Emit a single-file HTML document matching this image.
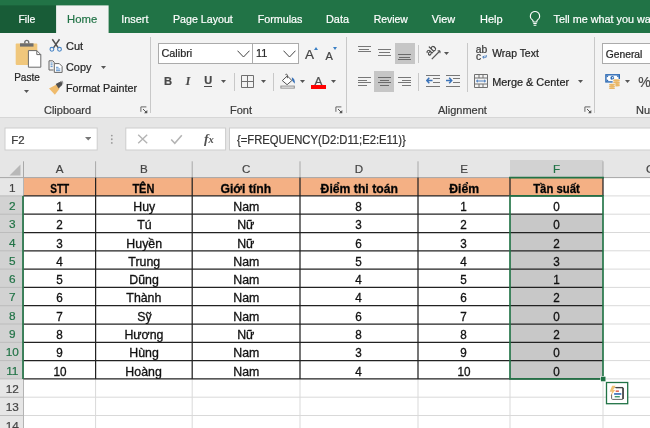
<!DOCTYPE html>
<html><head><meta charset="utf-8"><title>Excel</title>
<style>
html,body{margin:0;padding:0;}
body{width:650px;height:428px;overflow:hidden;position:relative;background:#fff;font-family:"Liberation Sans",sans-serif;color:#222;}
.abs{position:absolute;}
#wrap{position:absolute;left:0;top:0;width:650px;height:428px;overflow:hidden;will-change:transform;}
#titlebar{left:0;top:0;width:650px;height:33px;background:#217346;}
.tab{-webkit-text-stroke:0.2px currentColor;position:absolute;top:5px;height:28px;line-height:29px;color:#fff;font-size:11.5px;text-align:center;white-space:nowrap;}
#ribbon{left:0;top:33px;width:650px;height:85px;background:#f3f3f3;border-bottom:1px solid #d6d6d6;box-sizing:border-box;}
.rt{-webkit-text-stroke:0.22px currentColor;position:absolute;font-size:11.3px;color:#262626;white-space:nowrap;line-height:14px;}
.gl{-webkit-text-stroke:0.22px currentColor;position:absolute;font-size:11px;color:#3c3c3c;white-space:nowrap;line-height:14px;text-align:center;}
.vsep{position:absolute;width:1px;background:#d0d0d0;}
#fbar{left:0;top:118px;width:650px;height:42px;background:#e6e6e6;}
.box{position:absolute;background:#fff;border:1px solid #cfcfcf;box-sizing:border-box;}
#grid{left:0;top:160px;width:650px;height:268px;background:#fff;}
.ch{-webkit-text-stroke:0.2px currentColor;position:absolute;top:160px;height:17.6px;line-height:18.5px;font-size:11.6px;color:#3a3a3a;text-align:center;}
.rhd{-webkit-text-stroke:0.2px currentColor;position:absolute;left:0.5px;width:24px;font-size:11.8px;color:#444;text-align:center;}
.cell{position:absolute;font-size:12.6px;color:#111;-webkit-text-stroke:0.32px #111;text-align:center;white-space:nowrap;overflow:hidden;}
.hl{position:absolute;height:1px;background:#d4d4d4;}
.vl{position:absolute;width:1px;background:#d4d4d4;}
.bh{position:absolute;height:1.3px;background:#2b2b2b;}
.bv{position:absolute;width:1.3px;background:#2b2b2b;}
</style></head><body><div id="wrap">

<div id="titlebar" class="abs"></div>
<svg class="abs" style="left:0;top:0" width="120" height="36" viewBox="0 0 120 36"><rect x="0" y="5.4" width="56.1" height="27.6" fill="#185c37"/><rect x="56.1" y="5.4" width="52.5" height="29" fill="#f3f3f3"/></svg>
<div class="tab" style="left:-23.15px;width:100px;color:#fff;font-size:10.5px;">File</div>
<div class="tab" style="left:32.150000000000006px;width:100px;color:#217346;font-size:11.3px;">Home</div>
<div class="tab" style="left:84.85px;width:100px;color:#fff;font-size:10.85px;">Insert</div>
<div class="tab" style="left:152.9px;width:100px;color:#fff;font-size:10.65px;">Page Layout</div>
<div class="tab" style="left:230.05px;width:100px;color:#fff;font-size:10.75px;">Formulas</div>
<div class="tab" style="left:287.5px;width:100px;color:#fff;font-size:10.9px;">Data</div>
<div class="tab" style="left:340.8px;width:100px;color:#fff;font-size:10.45px;">Review</div>
<div class="tab" style="left:393.35px;width:100px;color:#fff;font-size:10.85px;">View</div>
<div class="tab" style="left:441.35px;width:100px;color:#fff;font-size:11px;">Help</div>
<div class="tab" style="left:553.5px;text-align:left;font-size:10.8px;">Tell me what you want to do</div>
<svg class="abs" style="left:527px;top:10px" width="16" height="18" viewBox="0 0 16 18"><path d="M8 1.5a4.6 4.6 0 0 0-2.6 8.4c.5.5.8 1 .8 1.8v.3h3.6v-.3c0-.8.3-1.300.8-1.800A4.600 4.600 0 0 0 8 1.500z" fill="none" stroke="#fff" stroke-width="1.1"/><path d="M6.300 13.500h3.400M6.600 15.200h2.800" stroke="#fff" stroke-width="1.100" fill="none"/></svg>
<div id="ribbon" class="abs"></div>
<div id="fbar" class="abs"></div>
<svg class="abs" style="left:14px;top:39px" width="29" height="31" viewBox="0 0 29 31"><rect x="1.700" y="4.600" width="21.600" height="21.300" rx="0.800" fill="#f0c77c"/><rect x="6" y="4.300" width="13.500" height="3.300" fill="#6e6e6e"/><path d="M10.800 4.500V3.300a1.950 1.950 0 0 1 3.900 0v1.200" fill="none" stroke="#6e6e6e" stroke-width="1.400"/><path d="M14.400 11.600h8.400l4 4V28.200H14.400z" fill="#fff" stroke="#6a6a6a" stroke-width="1"/><path d="M22.800 11.600v4h4" fill="none" stroke="#6a6a6a" stroke-width="1"/></svg>
<div class="rt" style="left:14.2px;top:71.2px;font-size:10px;color:#262626;">Paste</div>
<svg class="abs" style="left:24.0px;top:90.4px" width="5" height="3" viewBox="0 0 5 3"><path d="M0 0h5L2.5 3z" fill="#555"/></svg>
<svg class="abs" style="left:48px;top:38px" width="16" height="16" viewBox="0 0 16 16"><path d="M4.300 1.300l6.200 8.800M11.500 1.300L5.300 10.100" stroke="#505050" stroke-width="1.500" fill="none"/><circle cx="3.900" cy="11.300" r="1.900" fill="#f3f3f3" stroke="#4a86c6" stroke-width="1.100"/><circle cx="11.500" cy="11.300" r="1.900" fill="#f3f3f3" stroke="#4a86c6" stroke-width="1.100"/></svg>
<div class="rt" style="left:66px;top:39.3px;font-size:11.05px;color:#262626;">Cut</div>
<svg class="abs" style="left:48px;top:59px" width="16" height="16" viewBox="0 0 16 16"><path d="M1 1.800h3.800l1.400 1.400v1.300M1 1.800v9.200h4.500" fill="none" stroke="#666" stroke-width="1"/><path d="M6.300 4.600h5l2.800 2.800v6h-7.800z" fill="#fff" stroke="#666" stroke-width="1"/><path d="M8 8.300h2.500M8 10h4.300M8 11.700h4.300" stroke="#4a86c6" stroke-width="0.900"/><path d="M2.600 4h2M2.600 5.800h2M2.600 7.600h2" stroke="#4a86c6" stroke-width="0.900"/></svg>
<div class="rt" style="left:66px;top:60.3px;font-size:10.9px;color:#262626;">Copy</div>
<svg class="abs" style="left:100.5px;top:65.8px" width="5" height="3" viewBox="0 0 5 3"><path d="M0 0h5L2.5 3z" fill="#555"/></svg>
<svg class="abs" style="left:48px;top:80px" width="17" height="16" viewBox="0 0 17 16"><path d="M1 8.500l7.500-4 3 4.300-4.600 6z" fill="#efbb6c"/><path d="M7.700 4l3.800-2 3 0.300-0.300 2.700-3.600 3.400z" fill="#505050"/><path d="M12 1.600l2.500-0.400 0.400 2.400" fill="none" stroke="#8a8a8a" stroke-width="0.800"/></svg>
<div class="rt" style="left:66px;top:80.9px;font-size:10.75px;color:#262626;">Format Painter</div>
<div class="gl" style="left:17px;width:101px;top:103px;">Clipboard</div>
<svg class="abs" style="left:139.9px;top:105.9px" width="8" height="8" viewBox="0 0 8 8"><path d="M0.900 5.800V0.900H6.400" stroke="#666" stroke-width="1" fill="none"/><path d="M3 3L6 6" stroke="#555" stroke-width="1" fill="none"/><path d="M7.300 4V7.300H4z" fill="#555"/></svg>
<div class="vsep" style="left:150px;top:37px;height:76px;background:#c8c8c8;"></div>
<div class="box" style="left:158px;top:43px;width:95px;height:20.500px;border-color:#ababab;"></div>
<div class="box" style="left:252px;top:43px;width:47px;height:20.500px;border-color:#ababab;"></div>
<div class="rt" style="left:161.5px;top:46.4px;font-size:10.85px;color:#262626;">Calibri</div>
<div class="rt" style="left:256px;top:46.4px;font-size:10.85px;color:#262626;">11</div>
<svg class="abs" style="left:237px;top:50.3px" width="13" height="8" viewBox="0 0 13 8"><path d="M0.500 0.700L6.500 7l6-6.300" fill="none" stroke="#444" stroke-width="1"/></svg>
<svg class="abs" style="left:283px;top:50.3px" width="13" height="8" viewBox="0 0 13 8"><path d="M0.500 0.700L6.500 7l6-6.300" fill="none" stroke="#444" stroke-width="1"/></svg>
<div class="rt" style="left:305px;top:46.700px;font-size:13.500px;color:#444;line-height:16px;">A</div>
<svg class="abs" style="left:313.500px;top:46.500px" width="4" height="3" viewBox="0 0 4 3"><path d="M0 3h4L2 0z" fill="#3a7fc4"/></svg>
<div class="rt" style="left:325.500px;top:48.700px;font-size:11px;color:#444;line-height:14px;">A</div>
<svg class="abs" style="left:333px;top:46.500px" width="4" height="3" viewBox="0 0 4 3"><path d="M0 0h4L2 3z" fill="#3a7fc4"/></svg>
<div class="rt" style="left:164px;top:74px;font-size:11.200px;font-weight:bold;color:#4a4a4a;">B</div>
<div class="rt" style="left:185.700px;top:74px;font-size:11.500px;font-style:italic;font-family:'Liberation Serif',serif;font-weight:bold;color:#4a4a4a;">I</div>
<div class="rt" style="left:204.300px;top:74.500px;font-size:11px;font-weight:bold;color:#4a4a4a;border-bottom:1px solid #4a4a4a;line-height:11.500px;">U</div>
<svg class="abs" style="left:221.2px;top:79.7px" width="5" height="3" viewBox="0 0 5 3"><path d="M0 0h5L2.5 3z" fill="#555"/></svg>
<div class="vsep" style="left:233.5px;top:72.5px;height:18.0px;background:#c8c8c8;"></div>
<svg class="abs" style="left:241.300px;top:74.700px" width="13" height="13" viewBox="0 0 13 13"><path d="M0.500 0.500h12v12h-12zM6.500 0.500v12M0.500 6.500h12" fill="none" stroke="#707070" stroke-width="1"/></svg>
<svg class="abs" style="left:260.7px;top:79.7px" width="5" height="3" viewBox="0 0 5 3"><path d="M0 0h5L2.5 3z" fill="#555"/></svg>
<div class="vsep" style="left:272.7px;top:72.5px;height:18.0px;background:#c8c8c8;"></div>
<svg class="abs" style="left:280px;top:73px" width="16" height="17" viewBox="0 0 16 17"><path d="M2.300 7.600L7.300 2.900l4.600 4.600-4.800 4.200z" fill="#fff" stroke="#555" stroke-width="1"/><path d="M7.400 5.200V2.200a1.100 1.100 0 0 0-2-0.500" stroke="#555" stroke-width="1" fill="none"/><path d="M11.800 4.300c2.200 0.800 3.400 3.200 3 6.500l-1.300-1.600-1.300-1.500z" fill="#3b73b9"/><rect x="0.900" y="13.100" width="13.400" height="2" fill="#fff" stroke="#8a8a8a" stroke-width="1"/></svg>
<svg class="abs" style="left:300.0px;top:79.7px" width="5" height="3" viewBox="0 0 5 3"><path d="M0 0h5L2.5 3z" fill="#555"/></svg>
<div class="rt" style="left:314.500px;top:73.800px;font-size:11.700px;color:#505050;line-height:14px;">A</div>
<div class="abs" style="left:311px;top:85px;width:15px;height:3.700px;background:#f00;"></div>
<svg class="abs" style="left:331.1px;top:79.7px" width="5" height="3" viewBox="0 0 5 3"><path d="M0 0h5L2.5 3z" fill="#555"/></svg>
<div class="gl" style="left:201px;width:80px;top:102.500px;">Font</div>
<svg class="abs" style="left:335.3px;top:105.9px" width="8" height="8" viewBox="0 0 8 8"><path d="M0.900 5.800V0.900H6.400" stroke="#666" stroke-width="1" fill="none"/><path d="M3 3L6 6" stroke="#555" stroke-width="1" fill="none"/><path d="M7.300 4V7.300H4z" fill="#555"/></svg>
<div class="vsep" style="left:346.2px;top:37px;height:76px;background:#c8c8c8;"></div>
<div class="abs" style="left:357.90px;top:45.90px;width:12.8px;height:1px;background:#777;"></div>
<div class="abs" style="left:359.10px;top:48.50px;width:10.4px;height:1px;background:#777;"></div>
<div class="abs" style="left:357.90px;top:51.10px;width:12.8px;height:1px;background:#777;"></div>
<div class="abs" style="left:378.00px;top:49.40px;width:12.8px;height:1px;background:#777;"></div>
<div class="abs" style="left:379.20px;top:52.10px;width:10.4px;height:1px;background:#777;"></div>
<div class="abs" style="left:378.00px;top:54.80px;width:12.8px;height:1px;background:#777;"></div>
<div class="abs" style="left:394.700px;top:43.100px;width:20px;height:20.600px;background:#c6c6c6;"></div>
<div class="abs" style="left:398.10px;top:54.00px;width:12.8px;height:1px;background:#6a6a6a;"></div>
<div class="abs" style="left:399.30px;top:56.70px;width:10.4px;height:1px;background:#6a6a6a;"></div>
<div class="abs" style="left:398.10px;top:59.40px;width:12.8px;height:1px;background:#6a6a6a;"></div>
<div class="vsep" style="left:417.9px;top:45px;height:18px;background:#c8c8c8;"></div>
<svg class="abs" style="left:424px;top:44px" width="18" height="17" viewBox="0 0 18 17"><text x="0" y="0" transform="translate(5.300,12.300) rotate(-45)" font-family="Liberation Sans" font-size="9.800" fill="#3a3a3a" stroke="#3a3a3a" stroke-width="0.250">ab</text><path d="M7.800 15.200L15.800 7" stroke="#555" stroke-width="1.200" fill="none"/><path d="M13.600 6.800h2.400v2.400" stroke="#555" stroke-width="1" fill="none"/></svg>
<svg class="abs" style="left:443.7px;top:51.7px" width="5" height="3" viewBox="0 0 5 3"><path d="M0 0h5L2.5 3z" fill="#555"/></svg>
<div class="vsep" style="left:466.9px;top:42.5px;height:49.0px;background:#c8c8c8;"></div>
<div class="rt" style="left:475.700px;top:44.500px;font-size:10.300px;line-height:9px;color:#3a3a3a;">ab</div>
<div class="rt" style="left:476px;top:52px;font-size:10.300px;line-height:9px;color:#3a3a3a;">c</div>
<svg class="abs" style="left:481.700px;top:54.600px" width="5" height="4" viewBox="0 0 5 4"><path d="M4.200 0v2.200H0.800M2.200 0.700L0.700 2.200 2.200 3.600" stroke="#3b73b9" stroke-width="0.900" fill="none"/></svg>
<div class="rt" style="left:492.2px;top:47.2px;font-size:10.45px;color:#262626;">Wrap Text</div>
<div class="abs" style="left:357.90px;top:76.80px;width:12.8px;height:1px;background:#777;"></div>
<div class="abs" style="left:357.90px;top:79.50px;width:9.1px;height:1px;background:#777;"></div>
<div class="abs" style="left:357.90px;top:82.20px;width:12.8px;height:1px;background:#777;"></div>
<div class="abs" style="left:357.90px;top:84.90px;width:9.1px;height:1px;background:#777;"></div>
<div class="abs" style="left:374.400px;top:71.200px;width:20px;height:20.700px;background:#c6c6c6;"></div>
<div class="abs" style="left:378.00px;top:76.80px;width:12.8px;height:1px;background:#6a6a6a;"></div>
<div class="abs" style="left:379.95px;top:79.50px;width:8.9px;height:1px;background:#6a6a6a;"></div>
<div class="abs" style="left:378.00px;top:82.20px;width:12.8px;height:1px;background:#6a6a6a;"></div>
<div class="abs" style="left:379.95px;top:84.90px;width:8.9px;height:1px;background:#6a6a6a;"></div>
<div class="abs" style="left:398.10px;top:76.80px;width:12.8px;height:1px;background:#777;"></div>
<div class="abs" style="left:402.00px;top:79.50px;width:8.9px;height:1px;background:#777;"></div>
<div class="abs" style="left:398.10px;top:82.20px;width:12.8px;height:1px;background:#777;"></div>
<div class="abs" style="left:402.00px;top:84.90px;width:8.9px;height:1px;background:#777;"></div>
<div class="vsep" style="left:417.9px;top:72.5px;height:18.5px;background:#c8c8c8;"></div>
<div class="abs" style="left:425.8px;top:74.9px;width:14.3px;height:1px;background:#777;"></div>
<div class="abs" style="left:433.1px;top:78.4px;width:7px;height:1px;background:#777;"></div>
<div class="abs" style="left:433.1px;top:82.0px;width:7px;height:1px;background:#777;"></div>
<div class="abs" style="left:425.8px;top:85.6px;width:14.3px;height:1px;background:#777;"></div>
<svg class="abs" style="left:425.8px;top:77.300px" width="7" height="7" viewBox="0 0 7 7"><path d="M6.500 3.500H1M3.300 0.800L0.800 3.500l2.500 2.700" stroke="#3b73b9" stroke-width="1.500" fill="none"/></svg>
<div class="abs" style="left:445.9px;top:74.9px;width:14.3px;height:1px;background:#777;"></div>
<div class="abs" style="left:453.2px;top:78.4px;width:7px;height:1px;background:#777;"></div>
<div class="abs" style="left:453.2px;top:82.0px;width:7px;height:1px;background:#777;"></div>
<div class="abs" style="left:445.9px;top:85.6px;width:14.3px;height:1px;background:#777;"></div>
<svg class="abs" style="left:445.9px;top:77.300px" width="7" height="7" viewBox="0 0 7 7"><path d="M0 3.500h5.500M3.200 0.800L5.700 3.500 3.200 6.200" stroke="#3b73b9" stroke-width="1.500" fill="none"/></svg>
<svg class="abs" style="left:474px;top:74px" width="14" height="14" viewBox="0 0 14 14"><path d="M0.500 0.500h13v13h-13zM0.500 4h13M0.500 10h13M5 0.500V4M9 0.500V4M5 10v3.500M9 10v3.500" fill="none" stroke="#707070" stroke-width="1"/><path d="M2.500 7h9M4 5.800L2.500 7 4 8.200M10 5.800L11.500 7 10 8.200" stroke="#3b73b9" stroke-width="0.900" fill="none"/></svg>
<div class="rt" style="left:492.2px;top:74.8px;font-size:10.9px;color:#262626;">Merge &amp; Center</div>
<svg class="abs" style="left:578.3px;top:80.0px" width="5" height="3" viewBox="0 0 5 3"><path d="M0 0h5L2.5 3z" fill="#555"/></svg>
<div class="gl" style="left:438px;top:103px;">Alignment</div>
<svg class="abs" style="left:583.7px;top:105.9px" width="8" height="8" viewBox="0 0 8 8"><path d="M0.900 5.800V0.900H6.400" stroke="#666" stroke-width="1" fill="none"/><path d="M3 3L6 6" stroke="#555" stroke-width="1" fill="none"/><path d="M7.300 4V7.300H4z" fill="#555"/></svg>
<div class="vsep" style="left:593.7px;top:37px;height:76px;background:#c8c8c8;"></div>
<div class="box" style="left:602px;top:43px;width:60px;height:20.500px;border-color:#ababab;"></div>
<div class="rt" style="left:605.7px;top:47.6px;font-size:10.3px;color:#262626;">General</div>
<svg class="abs" style="left:604px;top:73px" width="18" height="17" viewBox="0 0 18 17"><rect x="1.900" y="1.800" width="13.400" height="7.100" fill="#fff" stroke="#2d6bb5" stroke-width="1.400"/><path d="M2.600 2.500h2a2.500 2.500 0 0 1-2 2zM14.600 2.500h-2a2.500 2.500 0 0 0 2 2zM2.600 8.200h2a2.500 2.500 0 0 0-2-2z" fill="#2d6bb5"/><circle cx="8.300" cy="4.900" r="1.900" fill="#2d6bb5"/><circle cx="8.700" cy="4.700" r="0.700" fill="#fff"/><rect x="8.600" y="6" width="8" height="7.500" fill="#f3f3f3"/><ellipse cx="12.500" cy="7.300" rx="3.400" ry="1.100" fill="#eab765"/><ellipse cx="12.500" cy="9.200" rx="3.400" ry="1" fill="#eab765"/><ellipse cx="12.500" cy="11" rx="3.400" ry="1" fill="#eab765"/><ellipse cx="12.500" cy="12.600" rx="3.400" ry="0.900" fill="#eab765"/><rect x="4.400" y="10.300" width="7" height="6" fill="#f3f3f3"/><ellipse cx="8" cy="11.800" rx="3.100" ry="1.100" fill="#eab765"/><ellipse cx="8" cy="13.600" rx="3.100" ry="1" fill="#eab765"/><ellipse cx="8" cy="15.200" rx="3.100" ry="0.900" fill="#eab765"/></svg>
<svg class="abs" style="left:624.9px;top:79.8px" width="5" height="3" viewBox="0 0 5 3"><path d="M0 0h5L2.5 3z" fill="#555"/></svg>
<div class="rt" style="left:638.300px;top:74px;font-size:14px;color:#4a4a4a;line-height:16px;">%</div>
<div class="gl" style="left:636px;top:103px;">Number</div>
<svg class="abs" style="left:0;top:120px" width="650" height="36" viewBox="0 120 650 36"><rect x="5" y="128" width="92.200" height="22" fill="#fff" stroke="#cdcdcd" stroke-width="1"/><rect x="125.800" y="128" width="99.800" height="22" fill="#fff" stroke="#cdcdcd" stroke-width="1"/><rect x="229.500" y="128" width="430" height="22" fill="#fff" stroke="#cdcdcd" stroke-width="1"/><circle cx="111.800" cy="135.600" r="0.900" fill="#9a9a9a"/><circle cx="111.800" cy="139.250" r="0.900" fill="#9a9a9a"/><circle cx="111.800" cy="142.900" r="0.900" fill="#9a9a9a"/><path d="M138.200 134.800l9 8.500M147.200 134.800l-9 8.500" stroke="#b4b4b4" stroke-width="1.400" fill="none"/><path d="M171.200 139.500l3.600 3.700L181.800 135.300" stroke="#b4b4b4" stroke-width="1.600" fill="none"/></svg>
<div class="rt" style="left:11.300px;top:132.700px;font-size:11.400px;color:#3a3a3a;">F2</div>
<svg class="abs" style="left:84.800px;top:137.200px" width="6.400" height="3.400" viewBox="0 0 6.400 3.400"><path d="M0 0h6.400L3.200 3.400z" fill="#777"/></svg>
<div class="abs" style="left:204px;top:130.500px;font-family:'Liberation Serif',serif;font-style:italic;font-weight:bold;font-size:13.500px;color:#505050;line-height:16px;">f<span style="font-size:10.500px;">x</span></div>
<div class="rt" style="left:236.5px;top:132.7px;font-size:12px;color:#333;transform:scaleX(0.938);transform-origin:0 50%;">{=FREQUENCY(D2:D11;E2:E11)}</div>
<div id="grid" class="abs"></div>
<svg class="abs" style="left:0;top:0" width="650" height="428" viewBox="0 0 650 428"><rect x="0" y="160" width="650" height="17.60" fill="#e6e6e6"/><rect x="510" y="160" width="93" height="17.60" fill="#d2d2d2"/><rect x="0" y="177.6" width="23.5" height="250.40" fill="#e6e6e6"/><rect x="0" y="195.90" width="23.5" height="183.00" fill="#d2d2d2"/><rect x="23.5" y="177.6" width="579.5" height="18.30" fill="#f4b084"/><rect x="510" y="214.20" width="93" height="164.70" fill="#c8c8c8"/><path d="M603 195.90H650" stroke="#d9d9d9" stroke-width="1"/><path d="M603 214.20H650" stroke="#d9d9d9" stroke-width="1"/><path d="M603 232.50H650" stroke="#d9d9d9" stroke-width="1"/><path d="M603 250.80H650" stroke="#d9d9d9" stroke-width="1"/><path d="M603 269.10H650" stroke="#d9d9d9" stroke-width="1"/><path d="M603 287.40H650" stroke="#d9d9d9" stroke-width="1"/><path d="M603 305.70H650" stroke="#d9d9d9" stroke-width="1"/><path d="M603 324.00H650" stroke="#d9d9d9" stroke-width="1"/><path d="M603 342.30H650" stroke="#d9d9d9" stroke-width="1"/><path d="M603 360.60H650" stroke="#d9d9d9" stroke-width="1"/><path d="M603 378.90H650" stroke="#d9d9d9" stroke-width="1"/><path d="M23.5 397.20H650" stroke="#d9d9d9" stroke-width="1"/><path d="M23.5 415.50H650" stroke="#d9d9d9" stroke-width="1"/><path d="M23.5 433.80H650" stroke="#d9d9d9" stroke-width="1"/><path d="M95.6 378.90V428" stroke="#d9d9d9" stroke-width="1"/><path d="M192.2 378.90V428" stroke="#d9d9d9" stroke-width="1"/><path d="M300 378.90V428" stroke="#d9d9d9" stroke-width="1"/><path d="M418 378.90V428" stroke="#d9d9d9" stroke-width="1"/><path d="M510 378.90V428" stroke="#d9d9d9" stroke-width="1"/><path d="M603 378.90V428" stroke="#d9d9d9" stroke-width="1"/><path d="M0 195.90H23.5" stroke="#bcbcbc" stroke-width="1"/><path d="M0 214.20H23.5" stroke="#bcbcbc" stroke-width="1"/><path d="M0 232.50H23.5" stroke="#bcbcbc" stroke-width="1"/><path d="M0 250.80H23.5" stroke="#bcbcbc" stroke-width="1"/><path d="M0 269.10H23.5" stroke="#bcbcbc" stroke-width="1"/><path d="M0 287.40H23.5" stroke="#bcbcbc" stroke-width="1"/><path d="M0 305.70H23.5" stroke="#bcbcbc" stroke-width="1"/><path d="M0 324.00H23.5" stroke="#bcbcbc" stroke-width="1"/><path d="M0 342.30H23.5" stroke="#bcbcbc" stroke-width="1"/><path d="M0 360.60H23.5" stroke="#bcbcbc" stroke-width="1"/><path d="M0 378.90H23.5" stroke="#bcbcbc" stroke-width="1"/><path d="M0 397.20H23.5" stroke="#bcbcbc" stroke-width="1"/><path d="M0 415.50H23.5" stroke="#bcbcbc" stroke-width="1"/><path d="M0 433.80H23.5" stroke="#bcbcbc" stroke-width="1"/><path d="M23.5 177.6V428" stroke="#b4b4b4" stroke-width="1"/><path d="M23.5 161.3V177.6" stroke="#a8a8a8" stroke-width="1"/><path d="M95.6 161.3V177.6" stroke="#a8a8a8" stroke-width="1"/><path d="M192.2 161.3V177.6" stroke="#a8a8a8" stroke-width="1"/><path d="M300 161.3V177.6" stroke="#a8a8a8" stroke-width="1"/><path d="M418 161.3V177.6" stroke="#a8a8a8" stroke-width="1"/><path d="M603 161.3V177.6" stroke="#a8a8a8" stroke-width="1"/><path d="M0 177.6H650" stroke="#a6a6a6" stroke-width="1"/><path d="M23.5 195.90H603" stroke="#222" stroke-width="1.25"/><path d="M23.5 214.20H603" stroke="#222" stroke-width="1.25"/><path d="M23.5 232.50H603" stroke="#222" stroke-width="1.25"/><path d="M23.5 250.80H603" stroke="#222" stroke-width="1.25"/><path d="M23.5 269.10H603" stroke="#222" stroke-width="1.25"/><path d="M23.5 287.40H603" stroke="#222" stroke-width="1.25"/><path d="M23.5 305.70H603" stroke="#222" stroke-width="1.25"/><path d="M23.5 324.00H603" stroke="#222" stroke-width="1.25"/><path d="M23.5 342.30H603" stroke="#222" stroke-width="1.25"/><path d="M23.5 360.60H603" stroke="#222" stroke-width="1.25"/><path d="M23.5 378.90H603" stroke="#222" stroke-width="1.25"/><path d="M95.6 177.6V378.90" stroke="#222" stroke-width="1.25"/><path d="M192.2 177.6V378.90" stroke="#222" stroke-width="1.25"/><path d="M300 177.6V378.90" stroke="#222" stroke-width="1.25"/><path d="M418 177.6V378.90" stroke="#222" stroke-width="1.25"/><path d="M510 177.6V195.90" stroke="#222" stroke-width="1.25"/><path d="M603 177.6V195.90" stroke="#222" stroke-width="1.25"/><path d="M509.1 177.6H603.9" stroke="#217346" stroke-width="1.8"/><path d="M23.0 195.90V378.90" stroke="#217346" stroke-width="1.65"/><rect x="510" y="195.90" width="93" height="183.00" fill="none" stroke="#217346" stroke-width="1.65"/><rect x="600.3" y="376.10" width="5.6" height="5.6" fill="#fff"/><rect x="600.9" y="376.70" width="4.6" height="4.6" fill="#217346"/></svg>
<svg class="abs" style="left:9px;top:164px" width="12" height="12" viewBox="0 0 12 12"><path d="M11.500 0.500v11h-11z" fill="#b8b8b8"/></svg>
<div class="ch" style="left:23.5px;width:72.1px;background:none;color:#444;">A</div>
<div class="ch" style="left:95.6px;width:96.6px;background:none;color:#444;">B</div>
<div class="ch" style="left:192.2px;width:107.80000000000001px;background:none;color:#444;">C</div>
<div class="ch" style="left:300px;width:118px;background:none;color:#444;">D</div>
<div class="ch" style="left:418px;width:92px;background:none;color:#444;">E</div>
<div class="ch" style="left:510px;width:93px;background:none;color:#217346;">F</div>
<div class="ch" style="left:603px;width:95px;background:none;color:#444;">G</div>
<div class="rhd" style="top:177.60px;width:23.5px;height:18.3px;line-height:20.3px;background:none;color:#444;">1</div>
<div class="rhd" style="top:195.90px;width:23.5px;height:18.3px;line-height:20.3px;background:none;color:#217346;">2</div>
<div class="rhd" style="top:214.20px;width:23.5px;height:18.3px;line-height:20.3px;background:none;color:#217346;">3</div>
<div class="rhd" style="top:232.50px;width:23.5px;height:18.3px;line-height:20.3px;background:none;color:#217346;">4</div>
<div class="rhd" style="top:250.80px;width:23.5px;height:18.3px;line-height:20.3px;background:none;color:#217346;">5</div>
<div class="rhd" style="top:269.10px;width:23.5px;height:18.3px;line-height:20.3px;background:none;color:#217346;">6</div>
<div class="rhd" style="top:287.40px;width:23.5px;height:18.3px;line-height:20.3px;background:none;color:#217346;">7</div>
<div class="rhd" style="top:305.70px;width:23.5px;height:18.3px;line-height:20.3px;background:none;color:#217346;">8</div>
<div class="rhd" style="top:324.00px;width:23.5px;height:18.3px;line-height:20.3px;background:none;color:#217346;">9</div>
<div class="rhd" style="top:342.30px;width:23.5px;height:18.3px;line-height:20.3px;background:none;color:#217346;">10</div>
<div class="rhd" style="top:360.60px;width:23.5px;height:18.3px;line-height:20.3px;background:none;color:#217346;">11</div>
<div class="rhd" style="top:378.90px;width:23.5px;height:18.3px;line-height:20.3px;background:none;color:#444;">12</div>
<div class="rhd" style="top:397.20px;width:23.5px;height:18.3px;line-height:20.3px;background:none;color:#444;">13</div>
<div class="rhd" style="top:415.50px;width:23.5px;height:18.3px;line-height:20.3px;background:none;color:#444;">14</div>
<div class="cell" style="left:23.5px;top:177.60px;width:72.1px;height:18.3px;line-height:22.700000000000003px;font-weight:bold;color:#000;font-size:12.4px;"><span style="display:inline-block;transform:scaleX(0.81);">STT</span></div>
<div class="cell" style="left:95.6px;top:177.60px;width:96.6px;height:18.3px;line-height:22.700000000000003px;font-weight:bold;color:#000;font-size:12.4px;"><span style="display:inline-block;transform:scaleX(0.886);">TÊN</span></div>
<div class="cell" style="left:192.2px;top:177.60px;width:107.80000000000001px;height:18.3px;line-height:22.700000000000003px;font-weight:bold;color:#000;font-size:12.4px;"><span style="display:inline-block;transform:scaleX(0.985);">Giới tính</span></div>
<div class="cell" style="left:300px;top:177.60px;width:118px;height:18.3px;line-height:22.700000000000003px;font-weight:bold;color:#000;font-size:12.4px;"><span style="display:inline-block;transform:scaleX(0.985);">Điểm thi toán</span></div>
<div class="cell" style="left:418px;top:177.60px;width:92px;height:18.3px;line-height:22.700000000000003px;font-weight:bold;color:#000;font-size:12.4px;"><span style="display:inline-block;transform:scaleX(0.985);">Điểm</span></div>
<div class="cell" style="left:510px;top:177.60px;width:93px;height:18.3px;line-height:22.700000000000003px;font-weight:bold;color:#000;font-size:12.4px;"><span style="display:inline-block;transform:scaleX(0.915);">Tần suất</span></div>
<div class="cell" style="left:23.5px;top:195.90px;width:72.1px;height:18.3px;line-height:22.700000000000003px;"><span style="display:inline-block;transform:scaleX(0.93);">1</span></div>
<div class="cell" style="left:95.6px;top:195.90px;width:96.6px;height:18.3px;line-height:22.700000000000003px;"><span style="display:inline-block;transform:scaleX(0.98);">Huy</span></div>
<div class="cell" style="left:192.2px;top:195.90px;width:107.80000000000001px;height:18.3px;line-height:22.700000000000003px;"><span style="display:inline-block;transform:scaleX(0.98);">Nam</span></div>
<div class="cell" style="left:300px;top:195.90px;width:118px;height:18.3px;line-height:22.700000000000003px;"><span style="display:inline-block;transform:scaleX(0.93);">8</span></div>
<div class="cell" style="left:418px;top:195.90px;width:92px;height:18.3px;line-height:22.700000000000003px;"><span style="display:inline-block;transform:scaleX(0.93);">1</span></div>
<div class="cell" style="left:510px;top:195.90px;width:93px;height:18.3px;line-height:22.700000000000003px;"><span style="display:inline-block;transform:scaleX(0.93);">0</span></div>
<div class="cell" style="left:23.5px;top:214.20px;width:72.1px;height:18.3px;line-height:22.700000000000003px;"><span style="display:inline-block;transform:scaleX(0.93);">2</span></div>
<div class="cell" style="left:95.6px;top:214.20px;width:96.6px;height:18.3px;line-height:22.700000000000003px;"><span style="display:inline-block;transform:scaleX(0.98);">Tú</span></div>
<div class="cell" style="left:192.2px;top:214.20px;width:107.80000000000001px;height:18.3px;line-height:22.700000000000003px;"><span style="display:inline-block;transform:scaleX(0.98);">Nữ</span></div>
<div class="cell" style="left:300px;top:214.20px;width:118px;height:18.3px;line-height:22.700000000000003px;"><span style="display:inline-block;transform:scaleX(0.93);">3</span></div>
<div class="cell" style="left:418px;top:214.20px;width:92px;height:18.3px;line-height:22.700000000000003px;"><span style="display:inline-block;transform:scaleX(0.93);">2</span></div>
<div class="cell" style="left:510px;top:214.20px;width:93px;height:18.3px;line-height:22.700000000000003px;"><span style="display:inline-block;transform:scaleX(0.93);">0</span></div>
<div class="cell" style="left:23.5px;top:232.50px;width:72.1px;height:18.3px;line-height:22.700000000000003px;"><span style="display:inline-block;transform:scaleX(0.93);">3</span></div>
<div class="cell" style="left:95.6px;top:232.50px;width:96.6px;height:18.3px;line-height:22.700000000000003px;"><span style="display:inline-block;transform:scaleX(0.98);">Huyền</span></div>
<div class="cell" style="left:192.2px;top:232.50px;width:107.80000000000001px;height:18.3px;line-height:22.700000000000003px;"><span style="display:inline-block;transform:scaleX(0.98);">Nữ</span></div>
<div class="cell" style="left:300px;top:232.50px;width:118px;height:18.3px;line-height:22.700000000000003px;"><span style="display:inline-block;transform:scaleX(0.93);">6</span></div>
<div class="cell" style="left:418px;top:232.50px;width:92px;height:18.3px;line-height:22.700000000000003px;"><span style="display:inline-block;transform:scaleX(0.93);">3</span></div>
<div class="cell" style="left:510px;top:232.50px;width:93px;height:18.3px;line-height:22.700000000000003px;"><span style="display:inline-block;transform:scaleX(0.93);">2</span></div>
<div class="cell" style="left:23.5px;top:250.80px;width:72.1px;height:18.3px;line-height:22.700000000000003px;"><span style="display:inline-block;transform:scaleX(0.93);">4</span></div>
<div class="cell" style="left:95.6px;top:250.80px;width:96.6px;height:18.3px;line-height:22.700000000000003px;"><span style="display:inline-block;transform:scaleX(0.98);">Trung</span></div>
<div class="cell" style="left:192.2px;top:250.80px;width:107.80000000000001px;height:18.3px;line-height:22.700000000000003px;"><span style="display:inline-block;transform:scaleX(0.98);">Nam</span></div>
<div class="cell" style="left:300px;top:250.80px;width:118px;height:18.3px;line-height:22.700000000000003px;"><span style="display:inline-block;transform:scaleX(0.93);">5</span></div>
<div class="cell" style="left:418px;top:250.80px;width:92px;height:18.3px;line-height:22.700000000000003px;"><span style="display:inline-block;transform:scaleX(0.93);">4</span></div>
<div class="cell" style="left:510px;top:250.80px;width:93px;height:18.3px;line-height:22.700000000000003px;"><span style="display:inline-block;transform:scaleX(0.93);">3</span></div>
<div class="cell" style="left:23.5px;top:269.10px;width:72.1px;height:18.3px;line-height:22.700000000000003px;"><span style="display:inline-block;transform:scaleX(0.93);">5</span></div>
<div class="cell" style="left:95.6px;top:269.10px;width:96.6px;height:18.3px;line-height:22.700000000000003px;"><span style="display:inline-block;transform:scaleX(0.98);">Dũng</span></div>
<div class="cell" style="left:192.2px;top:269.10px;width:107.80000000000001px;height:18.3px;line-height:22.700000000000003px;"><span style="display:inline-block;transform:scaleX(0.98);">Nam</span></div>
<div class="cell" style="left:300px;top:269.10px;width:118px;height:18.3px;line-height:22.700000000000003px;"><span style="display:inline-block;transform:scaleX(0.93);">4</span></div>
<div class="cell" style="left:418px;top:269.10px;width:92px;height:18.3px;line-height:22.700000000000003px;"><span style="display:inline-block;transform:scaleX(0.93);">5</span></div>
<div class="cell" style="left:510px;top:269.10px;width:93px;height:18.3px;line-height:22.700000000000003px;"><span style="display:inline-block;transform:scaleX(0.93);">1</span></div>
<div class="cell" style="left:23.5px;top:287.40px;width:72.1px;height:18.3px;line-height:22.700000000000003px;"><span style="display:inline-block;transform:scaleX(0.93);">6</span></div>
<div class="cell" style="left:95.6px;top:287.40px;width:96.6px;height:18.3px;line-height:22.700000000000003px;"><span style="display:inline-block;transform:scaleX(0.98);">Thành</span></div>
<div class="cell" style="left:192.2px;top:287.40px;width:107.80000000000001px;height:18.3px;line-height:22.700000000000003px;"><span style="display:inline-block;transform:scaleX(0.98);">Nam</span></div>
<div class="cell" style="left:300px;top:287.40px;width:118px;height:18.3px;line-height:22.700000000000003px;"><span style="display:inline-block;transform:scaleX(0.93);">4</span></div>
<div class="cell" style="left:418px;top:287.40px;width:92px;height:18.3px;line-height:22.700000000000003px;"><span style="display:inline-block;transform:scaleX(0.93);">6</span></div>
<div class="cell" style="left:510px;top:287.40px;width:93px;height:18.3px;line-height:22.700000000000003px;"><span style="display:inline-block;transform:scaleX(0.93);">2</span></div>
<div class="cell" style="left:23.5px;top:305.70px;width:72.1px;height:18.3px;line-height:22.700000000000003px;"><span style="display:inline-block;transform:scaleX(0.93);">7</span></div>
<div class="cell" style="left:95.6px;top:305.70px;width:96.6px;height:18.3px;line-height:22.700000000000003px;"><span style="display:inline-block;transform:scaleX(0.98);">Sỹ</span></div>
<div class="cell" style="left:192.2px;top:305.70px;width:107.80000000000001px;height:18.3px;line-height:22.700000000000003px;"><span style="display:inline-block;transform:scaleX(0.98);">Nam</span></div>
<div class="cell" style="left:300px;top:305.70px;width:118px;height:18.3px;line-height:22.700000000000003px;"><span style="display:inline-block;transform:scaleX(0.93);">6</span></div>
<div class="cell" style="left:418px;top:305.70px;width:92px;height:18.3px;line-height:22.700000000000003px;"><span style="display:inline-block;transform:scaleX(0.93);">7</span></div>
<div class="cell" style="left:510px;top:305.70px;width:93px;height:18.3px;line-height:22.700000000000003px;"><span style="display:inline-block;transform:scaleX(0.93);">0</span></div>
<div class="cell" style="left:23.5px;top:324.00px;width:72.1px;height:18.3px;line-height:22.700000000000003px;"><span style="display:inline-block;transform:scaleX(0.93);">8</span></div>
<div class="cell" style="left:95.6px;top:324.00px;width:96.6px;height:18.3px;line-height:22.700000000000003px;"><span style="display:inline-block;transform:scaleX(0.98);">Hương</span></div>
<div class="cell" style="left:192.2px;top:324.00px;width:107.80000000000001px;height:18.3px;line-height:22.700000000000003px;"><span style="display:inline-block;transform:scaleX(0.98);">Nữ</span></div>
<div class="cell" style="left:300px;top:324.00px;width:118px;height:18.3px;line-height:22.700000000000003px;"><span style="display:inline-block;transform:scaleX(0.93);">8</span></div>
<div class="cell" style="left:418px;top:324.00px;width:92px;height:18.3px;line-height:22.700000000000003px;"><span style="display:inline-block;transform:scaleX(0.93);">8</span></div>
<div class="cell" style="left:510px;top:324.00px;width:93px;height:18.3px;line-height:22.700000000000003px;"><span style="display:inline-block;transform:scaleX(0.93);">2</span></div>
<div class="cell" style="left:23.5px;top:342.30px;width:72.1px;height:18.3px;line-height:22.700000000000003px;"><span style="display:inline-block;transform:scaleX(0.93);">9</span></div>
<div class="cell" style="left:95.6px;top:342.30px;width:96.6px;height:18.3px;line-height:22.700000000000003px;"><span style="display:inline-block;transform:scaleX(0.98);">Hùng</span></div>
<div class="cell" style="left:192.2px;top:342.30px;width:107.80000000000001px;height:18.3px;line-height:22.700000000000003px;"><span style="display:inline-block;transform:scaleX(0.98);">Nam</span></div>
<div class="cell" style="left:300px;top:342.30px;width:118px;height:18.3px;line-height:22.700000000000003px;"><span style="display:inline-block;transform:scaleX(0.93);">3</span></div>
<div class="cell" style="left:418px;top:342.30px;width:92px;height:18.3px;line-height:22.700000000000003px;"><span style="display:inline-block;transform:scaleX(0.93);">9</span></div>
<div class="cell" style="left:510px;top:342.30px;width:93px;height:18.3px;line-height:22.700000000000003px;"><span style="display:inline-block;transform:scaleX(0.93);">0</span></div>
<div class="cell" style="left:23.5px;top:360.60px;width:72.1px;height:18.3px;line-height:22.700000000000003px;"><span style="display:inline-block;transform:scaleX(0.93);">10</span></div>
<div class="cell" style="left:95.6px;top:360.60px;width:96.6px;height:18.3px;line-height:22.700000000000003px;"><span style="display:inline-block;transform:scaleX(0.98);">Hoàng</span></div>
<div class="cell" style="left:192.2px;top:360.60px;width:107.80000000000001px;height:18.3px;line-height:22.700000000000003px;"><span style="display:inline-block;transform:scaleX(0.98);">Nam</span></div>
<div class="cell" style="left:300px;top:360.60px;width:118px;height:18.3px;line-height:22.700000000000003px;"><span style="display:inline-block;transform:scaleX(0.93);">4</span></div>
<div class="cell" style="left:418px;top:360.60px;width:92px;height:18.3px;line-height:22.700000000000003px;"><span style="display:inline-block;transform:scaleX(0.93);">10</span></div>
<div class="cell" style="left:510px;top:360.60px;width:93px;height:18.3px;line-height:22.700000000000003px;"><span style="display:inline-block;transform:scaleX(0.93);">0</span></div>
<svg class="abs" style="left:605px;top:381px" width="25" height="25" viewBox="0 0 25 25">
<rect x="1.500" y="1.500" width="21.200" height="21.200" fill="#fff" stroke="#217346" stroke-width="1.300"/>
<path d="M9.500 6.600h7.700a1 1 0 0 1 1 1v9.800a1 1 0 0 1-1 1H7.600a1 1 0 0 1-1-1V13" fill="#fff" stroke="#666" stroke-width="1"/>
<path d="M18 6.800v11.200" stroke="#444" stroke-width="1.600"/>
<path d="M11 6.600h7" stroke="#444" stroke-width="1.300"/>
<rect x="10.700" y="9.500" width="3.200" height="1.300" fill="#d9452b"/>
<rect x="9.100" y="12.100" width="7.200" height="1.700" fill="#3b73b9"/>
<rect x="9.700" y="15" width="5.100" height="1.400" fill="#3f9a6a"/>
<path d="M7.100 4.800h3.600L8.100 9.100h2.100L5.500 15l1.600-4.300H4.700z" fill="#f0c274"/>
</svg>
</div></body></html>
